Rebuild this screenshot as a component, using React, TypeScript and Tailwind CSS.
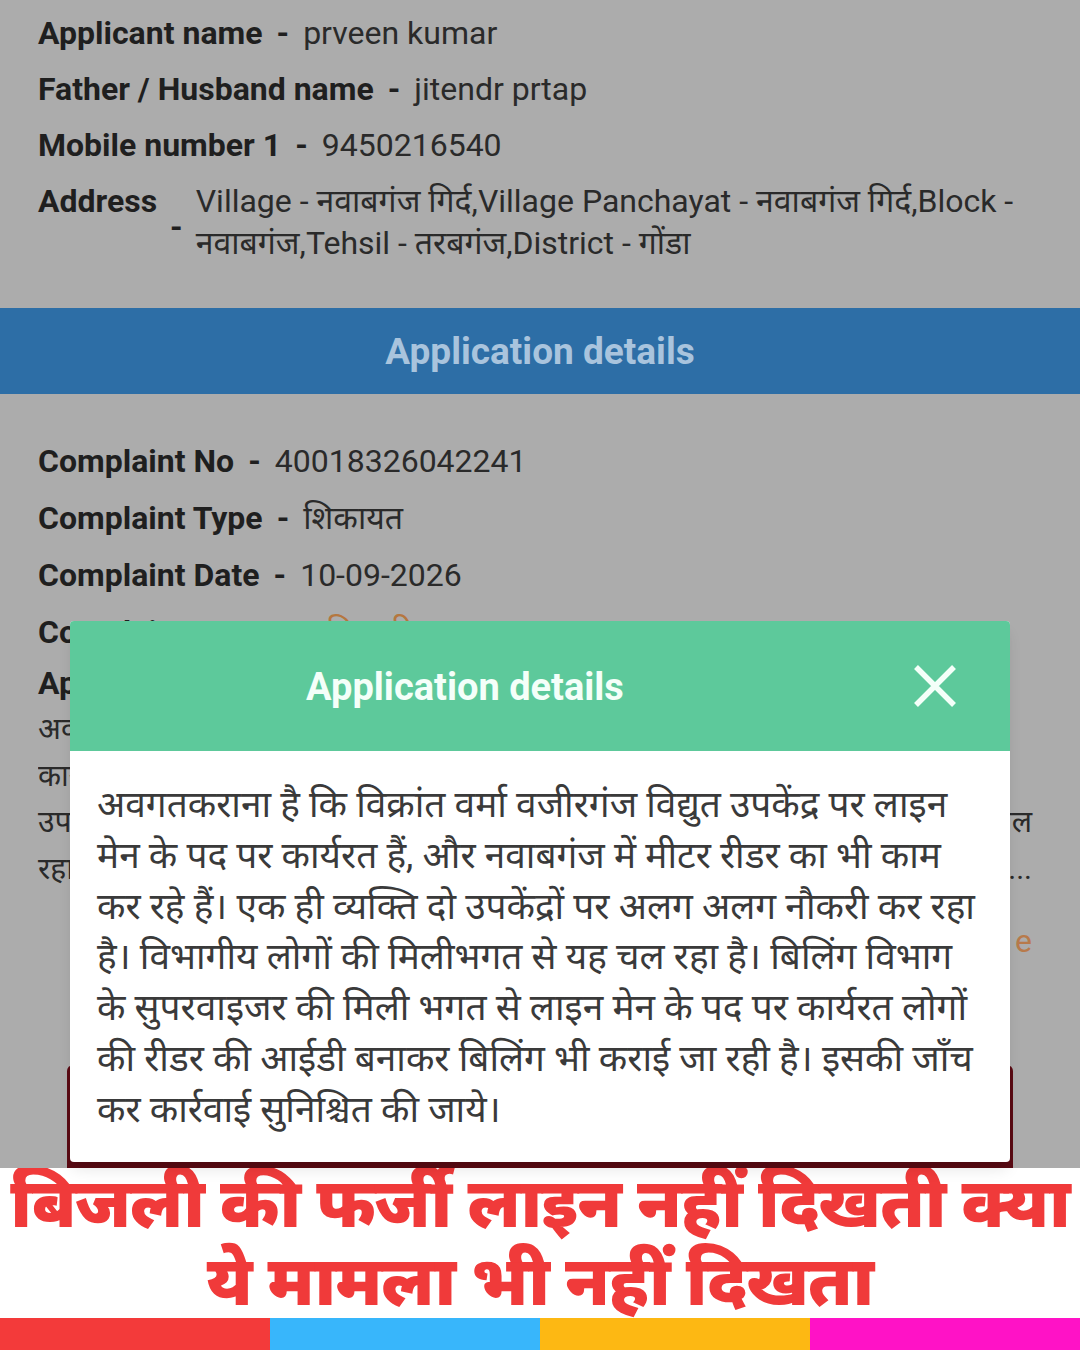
import React from "react";

const FONT = { fontFamily: 'Roboto, "Noto Sans Devanagari", "Noto Sans", sans-serif' };

function Row({ label, value, valueClass = "" }: { label: string; value: React.ReactNode; valueClass?: string }) {
  return (
    <div className="flex h-[56px] items-center text-[32px] leading-none">
      <span className="font-bold text-[#1f1f1f]">{label}</span>
      <span className="mx-[14px] font-bold text-[#1f1f1f]">-</span>
      <span className={`text-[#2a2a2a] ${valueClass}`}>{value}</span>
    </div>
  );
}

function CRow({ label, value, valueClass = "" }: { label: string; value: React.ReactNode; valueClass?: string }) {
  return (
    <div className="flex h-[57px] items-center text-[32px] leading-none">
      <span className="font-bold text-[#1f1f1f]">{label}</span>
      <span className="mx-[14px] font-bold text-[#1f1f1f]">-</span>
      <span className={`text-[#2a2a2a] ${valueClass}`}>{value}</span>
    </div>
  );
}

const modalLines = [
  "अवगतकराना है कि विक्रांत वर्मा वजीरगंज विद्युत उपकेंद्र पर लाइन",
  "मेन के पद पर कार्यरत हैं, और नवाबगंज में मीटर रीडर का भी काम",
  "कर रहे हैं। एक ही व्यक्ति दो उपकेंद्रों पर अलग अलग नौकरी कर रहा",
  "है। विभागीय लोगों की मिलीभगत से यह चल रहा है। बिलिंग विभाग",
  "के सुपरवाइजर की मिली भगत से लाइन मेन के पद पर कार्यरत लोगों",
  "की रीडर की आईडी बनाकर बिलिंग भी कराई जा रही है। इसकी जाँच",
  "कर कार्रवाई सुनिश्चित की जाये।",
];

export default function App() {
  return (
    <div className="w-[1080px] h-[1350px] overflow-hidden flex flex-col bg-white" style={FONT}>
      {/* dimmed page */}
      <div className="relative h-[1168px] bg-[#acacac] flex flex-col">
        <div className="pl-[38px] pr-[48px] pt-[5px]">
          <Row label="Applicant name" value="prveen kumar" />
          <Row label="Father / Husband name" value="jitendr prtap" />
          <Row label="Mobile number 1" value="9450216540" />
          <div className="flex items-center mt-[7px] text-[32px]">
            <span className="font-bold text-[#1f1f1f] self-start leading-[42px]">Address</span>
            <span className="mx-[13px] font-bold text-[#1f1f1f] mt-[10px]">-</span>
            <span className="text-[#2a2a2a] leading-[42px] whitespace-nowrap">
              Village - नवाबगंज गिर्द,Village Panchayat - नवाबगंज गिर्द,Block -<br />
              नवाबगंज,Tehsil - तरबगंज,District - गोंडा
            </span>
          </div>
        </div>

        <div className="mt-[44px] h-[86px] bg-[#2d6ea6] flex items-center justify-center">
          <span className="text-[37px] font-bold text-[#a9c4dd] mt-[2px]">Application details</span>
        </div>

        <div className="pl-[38px] pr-[48px] pt-[38px]">
          <CRow label="Complaint No" value="40018326042241" />
          <CRow label="Complaint Type" value="शिकायत" />
          <CRow label="Complaint Date" value="10-09-2026" />
          <CRow label="Complaint Status" value="निस्तारित" valueClass="text-[#b5773f]" />
          <div className="h-[46px] flex items-center text-[32px] font-bold text-[#1f1f1f]">Application details</div>
          <div className="text-[30px] leading-[46.5px] text-[#2a2a2a] w-[994px]">
            <div className="whitespace-nowrap overflow-hidden w-[940px]">
              अवगतकराना है कि विक्रांत वर्मा वजीरगंज विद्युत उपकेंद्र पर लाइन मेन के पद पर
            </div>
            <div className="whitespace-nowrap overflow-hidden w-[940px]">
              कार्यरत हैं, और नवाबगंज में मीटर रीडर का भी काम कर रहे हैं। एक ही व्यक्ति दो
            </div>
            <div className="text-justify [text-align-last:justify]">
              उपकेंद्रों पर अलग अलग नौकरी कर रहा है। विभागीय लोगों की मिलीभगत से यह चल
            </div>
            <div className="text-justify [text-align-last:justify]">
              रहा है। बिलिंग विभाग के सुपरवाइजर की मिली भगत से लाइन मेन के पद पर...
            </div>
          </div>
          <div className="mt-[33px] text-right text-[32px] text-[#b87a4b] leading-none tracking-[5px] mr-[-5px]">Read More</div>
        </div>

        <div className="mt-auto mx-[67px] h-[103px] bg-[#5a0b14] rounded-t-[6px]" />

        {/* modal */}
        <div className="absolute left-[70px] top-[621px] w-[940px] h-[541px] bg-white rounded-[4px] overflow-hidden flex flex-col shadow-lg">
          <div className="h-[130px] bg-[#5dc99b] flex items-center">
            <div className="flex-1 text-center text-[38px] font-bold text-[#f4fff9] mt-[2px]">Application details</div>
            <div className="w-[150px] flex items-center justify-center">
              <svg width="46" height="46" viewBox="0 0 46 46">
                <path d="M4 4 L42 42 M42 4 L4 42" stroke="#f4fff9" strokeWidth="5.5" strokeLinecap="butt" />
              </svg>
            </div>
          </div>
          <div className="pl-[27px] pt-[29px] text-[37px] leading-[50.8px] text-[#3a3a3a]">
            {modalLines.map((l, i) => (
              <div key={i} className="whitespace-nowrap">{l}</div>
            ))}
          </div>
        </div>
      </div>

      {/* banner */}
      <div className="h-[150px] bg-white flex flex-col items-center justify-center">
        <div className="text-[68.5px] leading-[78px] font-black text-[#f03a3a] whitespace-nowrap tracking-[-1px]">
          बिजली की फर्जी लाइन नहीं दिखती क्या
        </div>
        <div className="text-[68.5px] leading-[78px] font-black text-[#f03a3a] whitespace-nowrap tracking-[-1px]">
          ये मामला भी नहीं दिखता
        </div>
      </div>

      <div className="h-[32px] grid grid-cols-4">
        <div className="bg-[#f33a3a]" />
        <div className="bg-[#38b6fb]" />
        <div className="bg-[#fdb813]" />
        <div className="bg-[#ff12c6]" />
      </div>
    </div>
  );
}
